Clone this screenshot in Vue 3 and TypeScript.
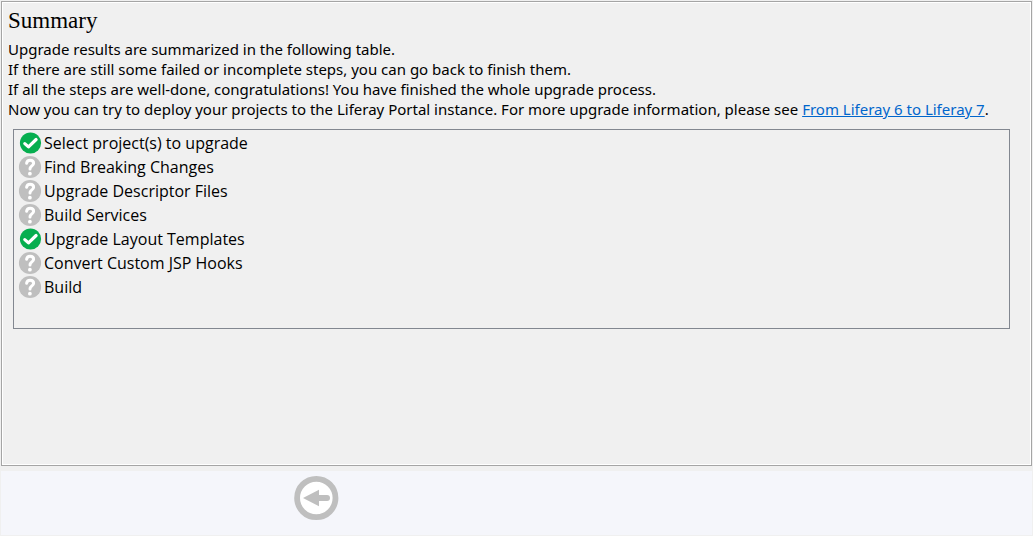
<script setup lang="ts">
interface Step {
  name: string
  done: boolean
}

const steps: Step[] = [
  { name: 'Select project(s) to upgrade', done: true },
  { name: 'Find Breaking Changes', done: false },
  { name: 'Upgrade Descriptor Files', done: false },
  { name: 'Build Services', done: false },
  { name: 'Upgrade Layout Templates', done: true },
  { name: 'Convert Custom JSP Hooks', done: false },
  { name: 'Build', done: false },
]
</script>

<template>
  <div class="wizard">
    <main class="page">
      <h1>Summary</h1>
      <p class="intro">
        Upgrade results are summarized in the following table.<br />
        If there are still some failed or incomplete steps, you can go back to finish them.<br />
        If all the steps are well-done, congratulations! You have finished the whole upgrade process.<br />
        Now you can try to deploy your projects to the Liferay Portal instance. For more upgrade information, please see
        <a href="#">From Liferay 6 to Liferay 7</a>.
      </p>
      <ul class="steps">
        <li v-for="step in steps" :key="step.name">
          <svg v-if="step.done" class="icon" viewBox="0 0 24 24" role="img" aria-label="Passed">
            <circle cx="12.5" cy="12" r="10.6" fill="#06ae4f" />
            <path d="M6.800 12.600l3.700 3.300 7.600-7.400" fill="none" stroke="#fff" stroke-width="3.200" stroke-linecap="round" stroke-linejoin="round" />
          </svg>
          <svg v-else class="icon" viewBox="0 0 24 24" role="img" aria-label="Incomplete">
            <circle cx="12" cy="12" r="11.1" fill="#bfbfbf" />
            <path d="M8.6 8.2C8.9 6 10.2 5.200 12.100 5.200c2.100 0 3.500 1.200 3.500 3 0 2.800-3.600 2.700-3.600 5.800" fill="none" stroke="#fff" stroke-width="3" stroke-linecap="round" />
            <circle cx="11.9" cy="18.7" r="1.9" fill="#fff" />
          </svg>
          <span>{{ step.name }}</span>
        </li>
      </ul>
    </main>
    <footer class="nav">
      <button class="back" type="button" aria-label="Back">
        <svg viewBox="0 0 46 46" aria-hidden="true">
          <circle cx="23.3" cy="23" r="19.2" fill="#fff" stroke="#bfbfbf" stroke-width="5.8" />
          <path d="M10 23l16-8.200v5.200h8a3 3 0 0 1 0 6h-8v5.200z" fill="#bfbfbf" />
        </svg>
      </button>
    </footer>
  </div>
</template>

<style>
body {
  margin: 0;
  background: #f0f0f0;
}
</style>

<style scoped>
.wizard {
  box-sizing: border-box;
  min-height: 100vh;
  padding: 1px;
  display: flex;
  flex-direction: column;
  gap: 5px;
  font: 15px/20px "Noto Sans", "Open Sans", sans-serif;
  color: #000;
}

.page {
  flex: 1;
  border: 1px solid #a5a5a5;
  box-shadow: inset 0 0 0 1px #fff;
  background: #f0f0f0;
  padding: 6px 6px 0;
}

h1 {
  margin: 0;
  font: 23px/26px "Liberation Serif", "Times New Roman", serif;
}

.intro {
  margin: 5px 0 0;
}

a {
  color: #0066cc;
  text-decoration: underline;
}

.steps {
  box-sizing: border-box;
  min-height: 200px;
  margin: 10px 15px 0 5px;
  padding: 1px 4px;
  list-style: none;
  border: 1px solid #828790;
  font: 16px/24px "Open Sans", "Noto Sans", sans-serif;
}

.steps li {
  display: flex;
  align-items: center;
  gap: 2px;
}

.icon {
  flex: none;
  width: 24px;
  height: 24px;
}

.nav {
  display: flex;
  height: 64px;
  background: #f5f6fb;
}

.back {
  width: 46px;
  height: 46px;
  margin: 4px 0 0 292px;
  padding: 0;
  border: 0;
  background: none;
}

.back svg {
  display: block;
  width: 46px;
  height: 46px;
}
</style>
